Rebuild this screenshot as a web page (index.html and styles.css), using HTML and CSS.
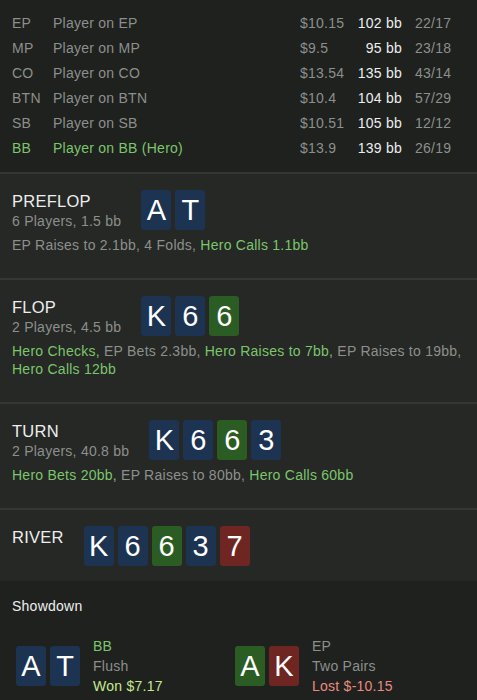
FILE: index.html
```html
<!DOCTYPE html>
<html lang="en">
<head>
  <meta charset="UTF-8" />
  <meta name="viewport" content="width=device-width, initial-scale=1.0" />
  <title>Hand History</title>
  <link rel="stylesheet" href="styles.css">
</head>
<body>
  <div class="players">
    <div class="player"><span class="pos">EP</span><span class="name">Player on EP</span><span class="money">$10.15</span><span class="stack">102 bb</span><span class="ratio">22/17</span></div>
    <div class="player"><span class="pos">MP</span><span class="name">Player on MP</span><span class="money">$9.5</span><span class="stack">95 bb</span><span class="ratio">23/18</span></div>
    <div class="player"><span class="pos">CO</span><span class="name">Player on CO</span><span class="money">$13.54</span><span class="stack">135 bb</span><span class="ratio">43/14</span></div>
    <div class="player"><span class="pos">BTN</span><span class="name">Player on BTN</span><span class="money">$10.4</span><span class="stack">104 bb</span><span class="ratio">57/29</span></div>
    <div class="player"><span class="pos">SB</span><span class="name">Player on SB</span><span class="money">$10.51</span><span class="stack">105 bb</span><span class="ratio">12/12</span></div>
    <div class="player hero"><span class="pos">BB</span><span class="name">Player on BB (Hero)</span><span class="money">$13.9</span><span class="stack">139 bb</span><span class="ratio">26/19</span></div>
  </div>

  <div class="street">
    <div class="street-head">
      <div class="street-info">
        <div class="street-title">PREFLOP</div>
        <div class="street-sub">6 Players, 1.5 bb</div>
      </div>
      <div class="cards">
        <span class="card blue">A</span><span class="card blue">T</span>
      </div>
    </div>
    <div class="actions">EP Raises to 2.1bb, 4 Folds, <span class="hero-act">Hero Calls 1.1bb</span></div>
  </div>

  <div class="street">
    <div class="street-head">
      <div class="street-info">
        <div class="street-title">FLOP</div>
        <div class="street-sub">2 Players, 4.5 bb</div>
      </div>
      <div class="cards">
        <span class="card blue">K</span><span class="card blue">6</span><span class="card green">6</span>
      </div>
    </div>
    <div class="actions"><span class="hero-act">Hero Checks,</span> EP Bets 2.3bb, <span class="hero-act">Hero Raises to 7bb,</span> EP Raises to 19bb, <span class="hero-act">Hero Calls 12bb</span></div>
  </div>

  <div class="street">
    <div class="street-head">
      <div class="street-info">
        <div class="street-title">TURN</div>
        <div class="street-sub">2 Players, 40.8 bb</div>
      </div>
      <div class="cards">
        <span class="card blue">K</span><span class="card blue">6</span><span class="card green">6</span><span class="card blue">3</span>
      </div>
    </div>
    <div class="actions"><span class="hero-act">Hero Bets 20bb,</span> EP Raises to 80bb, <span class="hero-act">Hero Calls 60bb</span></div>
  </div>

  <div class="street river">
    <div class="street-head">
      <div class="street-info">
        <div class="street-title">RIVER</div>
      </div>
      <div class="cards">
        <span class="card blue">K</span><span class="card blue">6</span><span class="card green">6</span><span class="card blue">3</span><span class="card red">7</span>
      </div>
    </div>
  </div>

  <div class="showdown">
    <div class="showdown-title">Showdown</div>
    <div class="hands">
      <div class="hand">
        <div class="cards">
          <span class="card blue">A</span><span class="card blue">T</span>
        </div>
        <div class="hand-info">
          <div class="hand-pos hero-act">BB</div>
          <div class="hand-rank">Flush</div>
          <div class="won">Won $7.17</div>
        </div>
      </div>
      <div class="hand">
        <div class="cards">
          <span class="card green">A</span><span class="card red">K</span>
        </div>
        <div class="hand-info">
          <div class="hand-pos">EP</div>
          <div class="hand-rank">Two Pairs</div>
          <div class="lost">Lost $-10.15</div>
        </div>
      </div>
    </div>
  </div>
</body>
</html>
```

FILE: styles.css
```css
:root {
  --bg-dark: #1e211e;
  --bg-street: #252825;
  --line: #343833;
  --text: #eeeeee;
  --muted: #8d8f8c;
  --hero: #7cc56c;
  --card-blue: #1c3351;
  --card-green: #2b5c23;
  --card-red: #6f2521;
}

body {
  margin: 0;
  font-family: 'Liberation Sans', Arial, sans-serif;
  font-size: 14px;
  background: var(--bg-dark);
  color: var(--text);
  letter-spacing: 0.25px;
}

.players {
  padding: 11px 12px 11px;
}

.player {
  display: grid;
  grid-template-columns: 41px 1fr 50px 52px 63px;
  line-height: 25px;
  color: var(--muted);
  white-space: nowrap;
}

.player .stack {
  color: var(--text);
  text-align: right;
}

.player .ratio {
  padding-left: 13px;
}

.player.hero .pos,
.player.hero .name {
  color: var(--hero);
}

.street {
  background: var(--bg-street);
  border-top: 2px solid var(--line);
  padding: 16px 12px 16px;
}

.street.river {
  padding-bottom: 15px;
}

.street-head {
  display: flex;
  align-items: flex-start;
  gap: 20px;
}

.street-title {
  font-size: 16.5px;
  line-height: 20px;
  padding-top: 1px;
}

.street-sub {
  color: var(--muted);
  line-height: 20px;
}

.cards {
  display: flex;
  gap: 4px;
}

.card {
  width: 30px;
  height: 40px;
  border-radius: 3px;
  display: flex;
  align-items: center;
  justify-content: center;
  font-size: 29px;
  color: #ffffff;
  letter-spacing: 0;
}

.card.blue { background: var(--card-blue); }
.card.green { background: var(--card-green); }
.card.red { background: var(--card-red); }

.actions {
  margin-top: 5px;
  margin-bottom: 8px;
  line-height: 18px;
  color: var(--muted);
}

.hero-act {
  color: var(--hero);
}

.showdown {
  padding: 15px 12px 0;
}

.showdown-title {
  font-size: 14px;
  line-height: 20px;
}

.hands {
  display: grid;
  grid-template-columns: 219px 1fr;
  margin-top: 20px;
  padding-left: 4px;
}

.hand {
  display: flex;
  align-items: center;
  gap: 13px;
}

.hand-info div {
  line-height: 20px;
}

.hand-rank {
  color: var(--muted);
}

.hand-pos {
  color: var(--muted);
}

.hand-pos.hero-act {
  color: var(--hero);
}

.won {
  color: #c6e98e;
}

.lost {
  color: #eb8a7e;
}
```
